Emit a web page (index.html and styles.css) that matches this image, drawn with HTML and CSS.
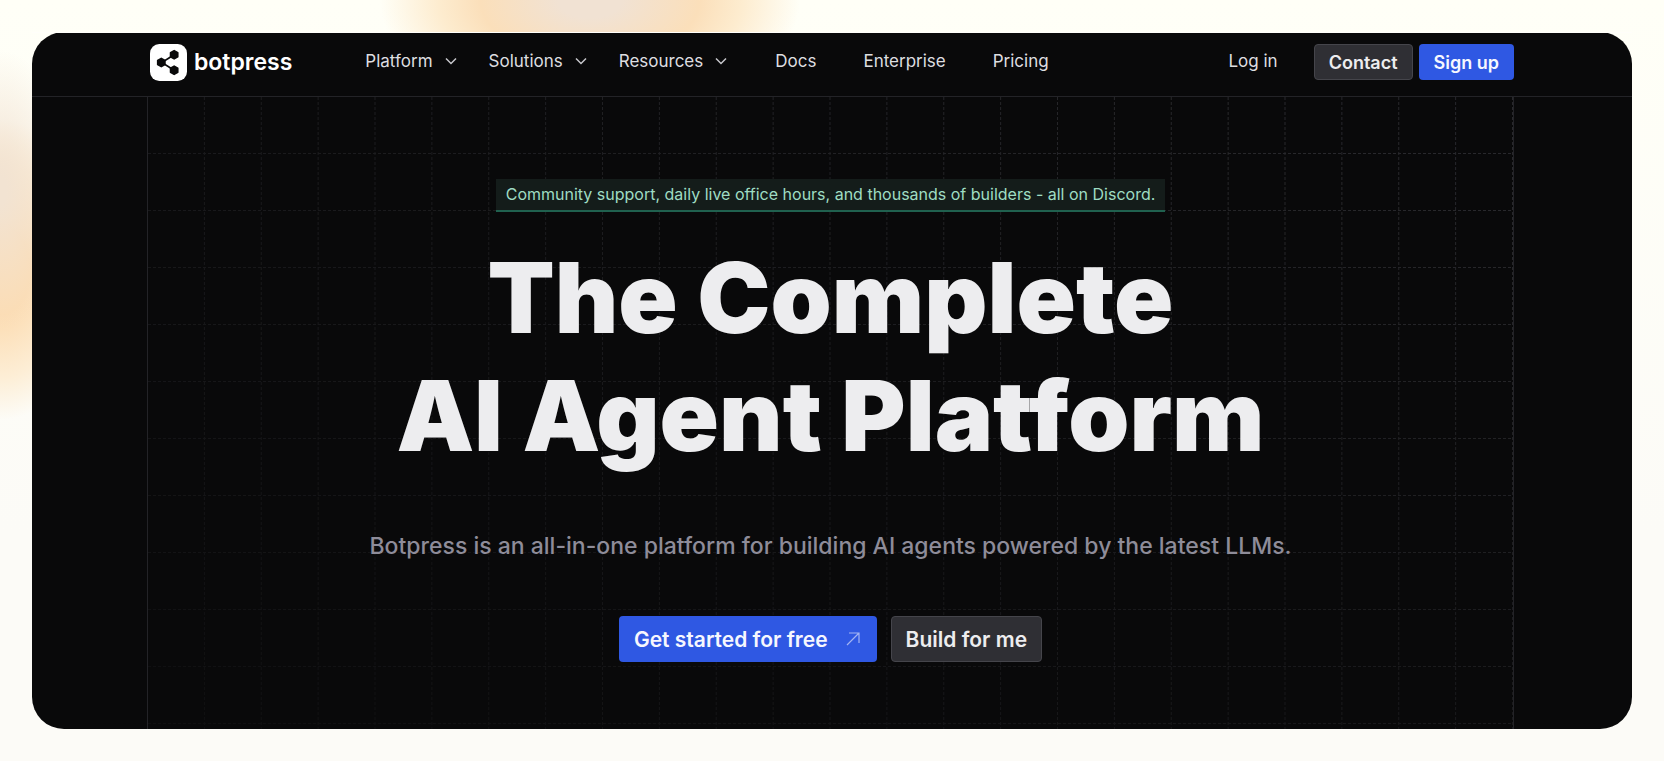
FILE: index.html
```html
<!DOCTYPE html>
<html lang="en">
<head>
    <meta charset="UTF-8">
    <meta name="viewport" content="width=device-width, initial-scale=1.0">
    <link rel="stylesheet" href="styles.css">
    <title>Botpress | The Complete AI Agent Platform</title>
</head>
<body>
    <div class="frame">
        <div class="panel">
            <header class="header">
                <a class="logo" href="#">
                    <svg class="logo-mark" viewBox="0 0 36 36" aria-hidden="true">
                        <rect width="36" height="36" rx="9" fill="#fff"/>
                        <path d="M23.5 10.5 11.5 18l12 7.5" fill="none" stroke="#09090a" stroke-width="1.6"/>
                        <path d="M23.5 6.5l3.5 2v4l-3.5 2-3.5-2v-4zM11 14l3.5 2v4l-3.5 2-3.5-2v-4zM23.5 21.5l3.5 2v4l-3.5 2-3.5-2v-4z" fill="#09090a" stroke="#09090a" stroke-width="1.6" stroke-linejoin="round"/>
                    </svg>
                    <span class="logo-text">botpress</span>
                </a>
                <nav class="nav">
                    <button class="nav-item" type="button">Platform
                        <svg class="chevron" viewBox="0 0 12 12" aria-hidden="true"><path d="M1 3.5l5 5 5-5"/></svg>
                    </button>
                    <button class="nav-item" type="button">Solutions
                        <svg class="chevron" viewBox="0 0 12 12" aria-hidden="true"><path d="M1 3.5l5 5 5-5"/></svg>
                    </button>
                    <button class="nav-item" type="button">Resources
                        <svg class="chevron" viewBox="0 0 12 12" aria-hidden="true"><path d="M1 3.5l5 5 5-5"/></svg>
                    </button>
                    <a class="nav-link" href="#">Docs</a>
                    <a class="nav-link" href="#">Enterprise</a>
                    <a class="nav-link" href="#">Pricing</a>
                </nav>
                <div class="account">
                    <a class="login" href="#">Log in</a>
                    <a class="btn btn-dark" href="#">Contact</a>
                    <a class="btn btn-blue" href="#">Sign up</a>
                </div>
            </header>
            <main class="main">
                <section class="hero">
                    <div class="grid-lines"></div>
                    <a class="banner" href="#">Community support, daily live office hours, and thousands of builders - all on Discord.</a>
                    <h1 class="title">The Complete<br>AI Agent Platform</h1>
                    <p class="subtitle">Botpress is an all-in-one platform for building AI agents powered by the latest LLMs.</p>
                    <div class="actions">
                        <a class="btn btn-large btn-blue" href="#">Get started for free
                            <svg class="arrow" viewBox="0 0 14 14" aria-hidden="true"><path d="M1 13L13 1M3 1h10v10"/></svg>
                        </a>
                        <a class="btn btn-large btn-dark" href="#">Build for me</a>
                    </div>
                </section>
            </main>
        </div>
    </div>
</body>
</html>
```
FILE: styles.css
```css
* {
    box-sizing: border-box;
}
body {
    margin: 0;
    min-height: 100vh;
    padding: 32px;
    display: flex;
    flex-direction: column;
    font-family: Inter, "Liberation Sans", sans-serif;
    color: #ededef;
    background:
        radial-gradient(ellipse 210px 120px at 590px 0, #f1e2d3 15%, #fbdfba 52%, #fdeccf 72%, transparent),
        radial-gradient(ellipse 70px 140px at 0 190px, #f2e3d2 10%, transparent),
        radial-gradient(ellipse 100px 150px at 0 270px, #fcdcb2 30%, #fdeed6 72%, transparent),
        linear-gradient(#fffff7, #fcfbf7 70%);
}
a {
    color: inherit;
    text-decoration: none;
}
/* the top of the panel is cut 1px into its rounded corners */
.frame {
    flex: 1;
    display: flex;
    border-top: 1px solid #fffefa;
    overflow: hidden;
}
.panel {
    flex: 1;
    display: flex;
    flex-direction: column;
    margin-top: -1px;
    border-radius: 32px;
    background: #09090a;
    overflow: hidden;
}

/* header */
.header {
    height: 65px;
    padding: 12px 118px 16px;
    display: flex;
    align-items: center;
    border-bottom: 1px solid #232327;
}
.logo {
    display: flex;
    align-items: center;
    gap: 7px;
}
.logo-mark {
    width: 37px;
    height: 37px;
}
.logo-text {
    font-size: 23px;
    font-weight: 600;
    color: #fff;
}
.nav {
    display: flex;
    align-items: center;
    margin-left: 73px;
    padding-bottom: 2px;
    font-size: 17px;
    color: #dedee0;
}
.nav-item {
    display: flex;
    align-items: center;
    gap: 12px;
    margin: 0 32px 0 0;
    padding: 0;
    border: 0;
    background: none;
    font: inherit;
    color: inherit;
}
.nav-link {
    margin-left: 16px;
    margin-right: 31px;
}
.chevron {
    width: 12px;
    height: 12px;
    fill: none;
    stroke: #c8c8cc;
    stroke-width: 1.5;
}
.account {
    display: flex;
    align-items: center;
    gap: 6px;
    margin-left: auto;
}
.login {
    margin-right: 30px;
    padding-bottom: 2px;
    font-size: 17px;
    color: #dedee0;
}
.btn {
    display: flex;
    align-items: center;
    height: 36px;
    padding: 0 14px;
    border: 1px solid transparent;
    border-radius: 4px;
    font-size: 18px;
    font-weight: 600;
}
.btn-dark {
    background: #2f2f34;
    border-color: #45454b;
}
.btn-blue {
    background: #2f58e3;
    color: #f6f7fe;
}
.btn-large {
    height: 46px;
    font-size: 21px;
}

/* hero */
.main {
    flex: 1;
    display: flex;
    padding: 0 118px 0 115px;
}
.hero {
    position: relative;
    flex: 1;
    display: flex;
    flex-direction: column;
    align-items: center;
    padding-top: 82px;
    border: solid #232327;
    border-width: 0 1px;
}
/* dashed 24 column grid, brightest at the top right */
.grid-lines {
    position: absolute;
    inset: 0;
    -webkit-mask-image: linear-gradient(to top right, rgba(0, 0, 0, .2), rgba(0, 0, 0, .5) 50%, rgba(0, 0, 0, .9) 90%);
    mask-image: linear-gradient(to top right, rgba(0, 0, 0, .2), rgba(0, 0, 0, .5) 50%, rgba(0, 0, 0, .9) 90%);
}
.grid-lines::before,
.grid-lines::after {
    content: "";
    position: absolute;
    inset: 0;
}
.grid-lines::before {
    background: linear-gradient(to left, #2c2c30 1px, transparent 1px) 0 0 / calc(100% / 24) 100%;
    -webkit-mask-image: repeating-linear-gradient(#000 0 3px, transparent 3px 5px);
    mask-image: repeating-linear-gradient(#000 0 3px, transparent 3px 5px);
}
.grid-lines::after {
    background: linear-gradient(to top, #2c2c30 1px, transparent 1px) 0 0 / 100% 57px;
    -webkit-mask-image: repeating-linear-gradient(90deg, #000 0 3px, transparent 3px 5px);
    mask-image: repeating-linear-gradient(90deg, #000 0 3px, transparent 3px 5px);
}
.banner,
.title,
.subtitle,
.actions {
    position: relative;
}
.banner {
    padding: 4px 10px;
    border-bottom: 2px solid #20614f;
    background: #141c1a;
    font-size: 16px;
    line-height: 23px;
    color: #9fdcc3;
}
.title {
    margin: 27px 0 0;
    font-size: 98px;
    font-weight: 900;
    line-height: 118px;
    text-align: center;
}
.subtitle {
    margin: 55px 0 0;
    font-size: 23px;
    font-weight: 500;
    line-height: 32px;
    color: #8e8c99;
}
.actions {
    display: flex;
    gap: 14px;
    margin-top: 54px;
}
.arrow {
    width: 14px;
    height: 14px;
    margin: 0 2px 0 18px;
    fill: none;
    stroke: #a3b4f3;
    stroke-width: 1.2;
}
```
